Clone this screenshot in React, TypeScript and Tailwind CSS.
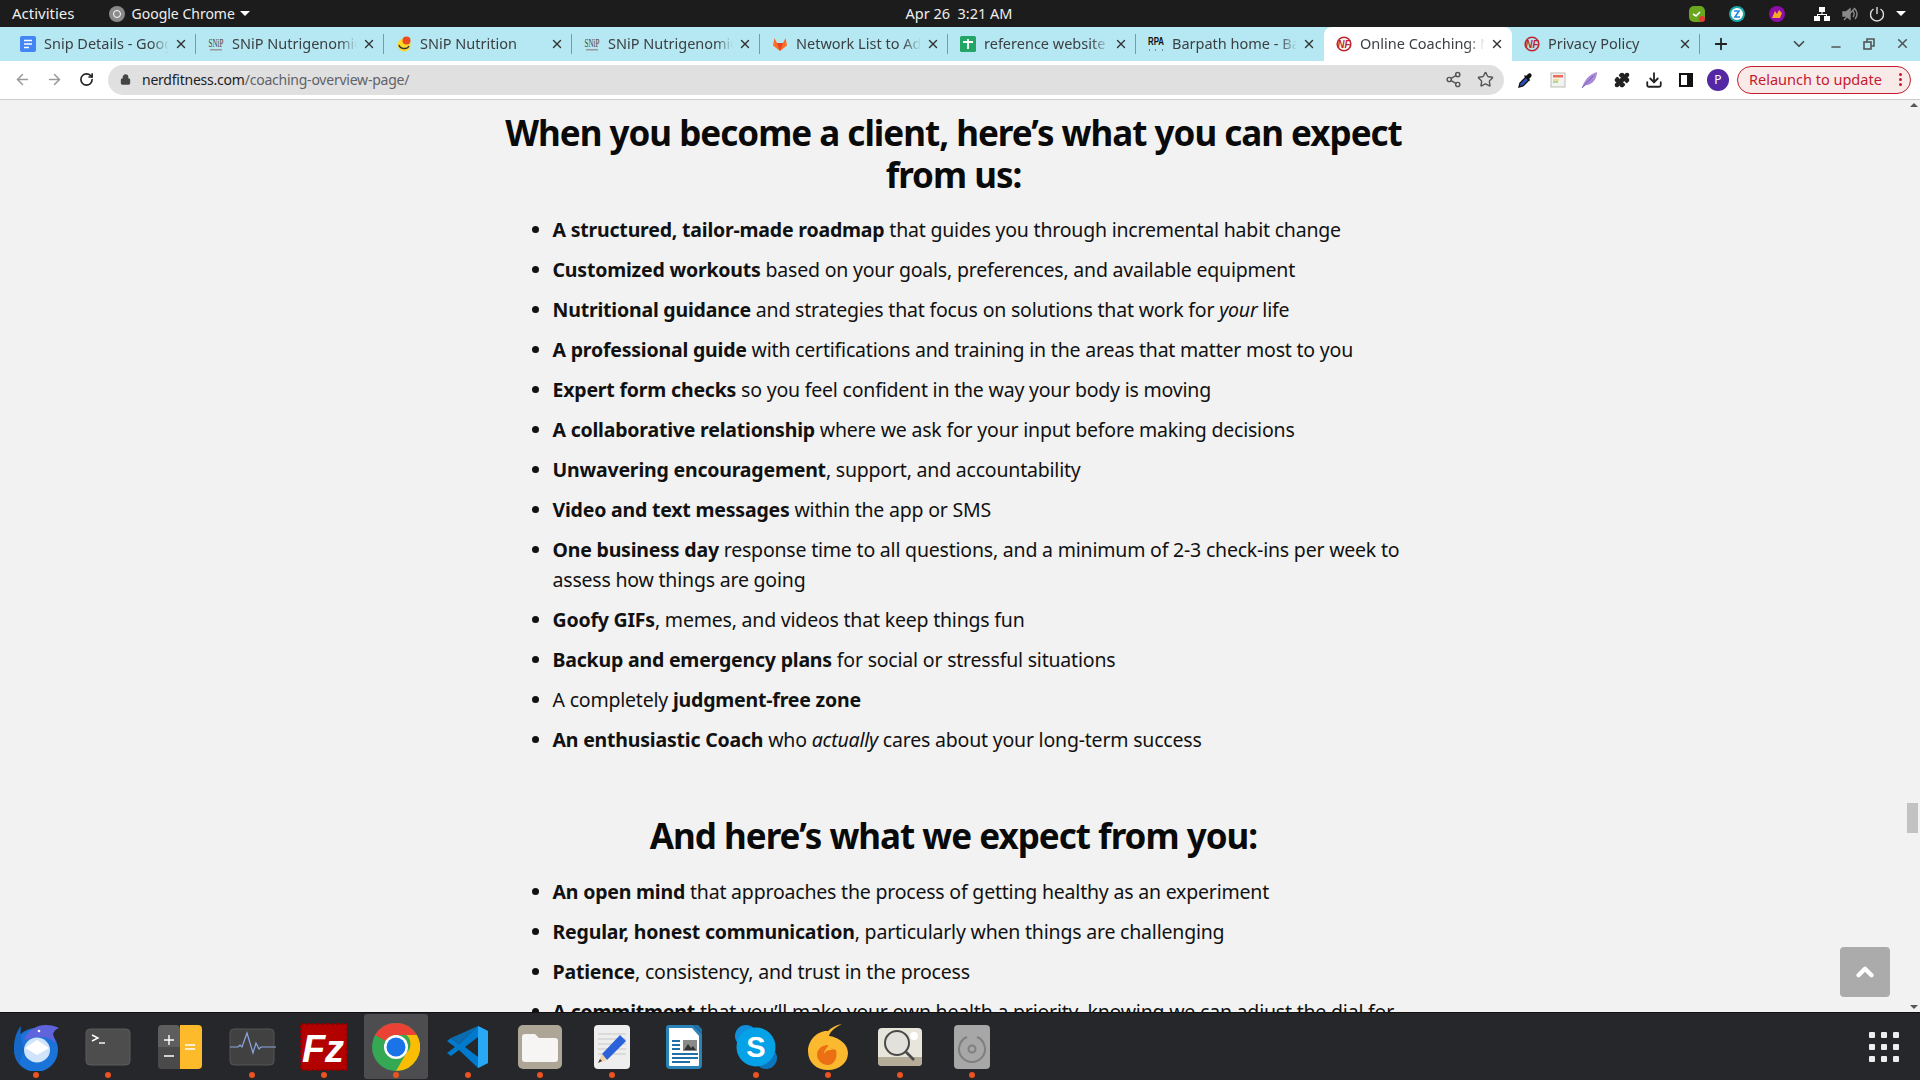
import { ArrowLeft, ArrowRight, ChevronDown, ChevronUp, Download, Lock, Minus, Plus, Puzzle, RotateCw, Share2, Star, X } from "lucide-react";
import type { ReactNode } from "react";

const UI_FONT = "font-['Noto_Sans',sans-serif]";

function NfIcon() {
  return (
    <svg viewBox="0 0 16 16" className="h-4 w-4 shrink-0">
      <circle cx="8" cy="8" r="6.8" fill="none" stroke="#c0272d" strokeWidth="1.6" />
      <text x="8" y="11.500" textAnchor="middle" fontSize="10" fontWeight="800" fontStyle="italic" fill="#c0272d" fontFamily="Liberation Sans" textLength="13" lengthAdjust="spacingAndGlyphs">NF</text>
    </svg>
  );
}

function SnipIcon() {
  return (
    <svg viewBox="0 0 16 16" className="h-4 w-4 shrink-0">
      <text x="8" y="11" textAnchor="middle" fontSize="13" fontFamily="Liberation Serif" fill="#444" textLength="15" lengthAdjust="spacingAndGlyphs">SNiP</text>
      <rect x="2" y="13" width="12" height="1.5" fill="#999" />
    </svg>
  );
}

const tabs: { title: string; icon: ReactNode; active?: boolean; hideSep?: boolean }[] = [
  {
    title: "Snip Details - Google Docs",
    icon: (
      <svg viewBox="0 0 16 16" className="h-4 w-4 shrink-0">
        <rect x="0" y="0" width="16" height="16" rx="2" fill="#4285f4" />
        <path d="M4 4.5h8M4 8h8M4 11.5h5" stroke="#fff" strokeWidth="1.6" />
      </svg>
    ),
  },
  { title: "SNiP Nutrigenomics", icon: <SnipIcon /> },
  {
    title: "SNiP Nutrition",
    icon: (
      <svg viewBox="0 0 16 16" className="h-4 w-4 shrink-0">
        <circle cx="8" cy="9" r="6.5" fill="#fbd92c" />
        <path d="M3 9c1 4 8 5 10 1" fill="none" stroke="#333" strokeWidth="1.4" />
        <circle cx="10.5" cy="4.5" r="4" fill="#ea4b1f" />
      </svg>
    ),
  },
  { title: "SNiP Nutrigenomics", icon: <SnipIcon /> },
  {
    title: "Network List to Add",
    icon: (
      <svg viewBox="0 0 16 16" className="h-4 w-4 shrink-0">
        <path d="M8 15 1 9.5 2.5 2 5 7h6l2.5-5L15 9.5z" fill="#fc6d26" />
        <path d="M8 15 5 7h6z" fill="#e24329" />
      </svg>
    ),
  },
  {
    title: "reference website",
    icon: (
      <svg viewBox="0 0 16 16" className="h-4 w-4 shrink-0">
        <rect width="16" height="16" rx="1.5" fill="#23a566" />
        <path d="M3 6h10M8 3v10" stroke="#fff" strokeWidth="1.8" />
      </svg>
    ),
  },
  {
    title: "Barpath home - Barpath",
    icon: (
      <svg viewBox="0 0 16 16" className="h-4 w-4 shrink-0">
        <text x="8" y="9" textAnchor="middle" fontSize="10" fontWeight="700" fontFamily="Liberation Sans" fill="#111" textLength="16" lengthAdjust="spacingAndGlyphs">RPA</text>
        <path d="M1 14h1M7 14h1M14 14h1" stroke="#777" strokeWidth="1.5" />
      </svg>
    ),
    hideSep: true,
  },
  { title: "Online Coaching: Nerd", icon: <NfIcon />, active: true, hideSep: true },
  { title: "Privacy Policy", icon: <NfIcon /> },
];

const expectFromUs: ReactNode[] = [
  <><b>A structured, tailor-made roadmap</b> that guides you through incremental habit change</>,
  <><b>Customized workouts</b> based on your goals, preferences, and available equipment</>,
  <><b>Nutritional guidance</b> and strategies that focus on solutions that work for <i>your</i> life</>,
  <><b>A professional guide</b> with certifications and training in the areas that matter most to you</>,
  <><b>Expert form checks</b> so you feel confident in the way your body is moving</>,
  <><b>A collaborative relationship</b> where we ask for your input before making decisions</>,
  <><b>Unwavering encouragement</b>, support, and accountability</>,
  <><b>Video and text messages</b> within the app or SMS</>,
  <><b>One business day</b> response time to all questions, and a minimum of 2-3 check-ins per week to<br />assess how things are going</>,
  <><b>Goofy GIFs</b>, memes, and videos that keep things fun</>,
  <><b>Backup and emergency plans</b> for social or stressful situations</>,
  <>A completely <b>judgment-free zone</b></>,
  <><b>An enthusiastic Coach</b> who <i>actually</i> cares about your long-term success</>,
];

const expectFromYou: ReactNode[] = [
  <><b>An open mind</b> that approaches the process of getting healthy as an experiment</>,
  <><b>Regular, honest communication</b>, particularly when things are challenging</>,
  <><b>Patience</b>, consistency, and trust in the process</>,
  <><b>A commitment</b> that you’ll make your own health a priority, knowing we can adjust the dial for</>,
];

const dockIcons: { icon: ReactNode; dot: boolean; active?: boolean }[] = [
  {
    dot: true,
    icon: (
      <svg viewBox="0 0 48 48" className="h-12 w-12">
        <circle cx="24" cy="27" r="22" fill="#1a73d9" />
        <path d="M12 18C14 8 24 2 34 2c5 0 9 1 13 3-3 1-5 3-6 6 1 3 2 6 2 9-6-7-20-8-31-2z" fill="#5f63dc" />
        <path d="M9 3c-5 6-7 14-7 22 0 6 2 11 5 15l6-12C9 20 8 11 9 3z" fill="#1567c8" />
        <ellipse cx="25" cy="27" rx="13" ry="12.500" fill="#cfe3fa" />
        <path d="M13 25 25 17l12 8-12 7z" fill="#fff" />
        <circle cx="27" cy="8" r="1.300" fill="#fff" />
      </svg>
    ),
  },
  {
    dot: true,
    icon: (
      <svg viewBox="0 0 48 48" className="h-12 w-12">
        <rect x="2" y="6" width="44" height="36" rx="4" fill="#4d4d4d" stroke="#5c5c5c" />
        <path d="m8 12 6 3-6 3" fill="none" stroke="#fff" strokeWidth="1.4" />
        <path d="M15 20h6" stroke="#fff" strokeWidth="1.4" />
      </svg>
    ),
  },
  {
    dot: false,
    icon: (
      <svg viewBox="0 0 48 48" className="h-12 w-12">
        <rect x="2" y="2" width="22" height="44" rx="4" fill="#5e5e5e" />
        <path d="M2 24h22v22H6a4 4 0 0 1-4-4z" fill="#4a4a4a" />
        <path d="M24 2h18a4 4 0 0 1 4 4v36a4 4 0 0 1-4 4H24z" fill="#fdbb2c" />
        <path d="M8 17h10M13 12v10M8 33h10M29 22h10M29 26h10" stroke="#fff" strokeWidth="1.4" />
      </svg>
    ),
  },
  {
    dot: true,
    icon: (
      <svg viewBox="0 0 48 48" className="h-12 w-12">
        <rect x="2" y="6" width="44" height="36" rx="4" fill="#414141" stroke="#565656" />
        <path d="M2 24h8l2-2 2 2 5-14 6 20 3-10 3 6 2-2h17" fill="none" stroke="#8da7e0" strokeWidth="1.2" />
      </svg>
    ),
  },
  {
    dot: true,
    icon: (
      <svg viewBox="0 0 48 48" className="h-12 w-12">
        <rect x="1" y="1" width="46" height="46" fill="#b30000" stroke="#8d0000" strokeWidth="2" strokeDasharray="3 2" />
        <rect x="3" y="3" width="42" height="42" fill="#b30000" />
        <text x="23" y="39" textAnchor="middle" fontSize="38" fontWeight="700" fontStyle="italic" fill="#fff" fontFamily="Liberation Sans">Fz</text>
      </svg>
    ),
  },
  {
    dot: true,
    active: true,
    icon: (
      <svg viewBox="0 0 48 48" className="relative h-12 w-12">
        <circle cx="24" cy="24" r="24" fill="#34a853" />
        <path d="M24 0a24 24 0 0 1 20.8 12H24a12 12 0 0 0-10.4 6L3.2 12A24 24 0 0 1 24 0z" fill="#ea4335" />
        <path d="M44.8 12A24 24 0 0 1 24 48l10.4-18a12 12 0 0 0 0-18z" fill="#fbbc04" />
        <circle cx="24" cy="24" r="12" fill="#fff" />
        <circle cx="24" cy="24" r="9.5" fill="#1a73e8" />
      </svg>
    ),
  },
  {
    dot: true,
    icon: (
      <svg viewBox="0 0 48 48" className="h-12 w-12">
        <path d="M34 3 44 8v32l-10 5L15 27l-8 6-4-3 8-6-8-6 4-3 8 6z" fill="#007acc" />
        <path d="M34 3 44 8v32l-10 5z" fill="#29a9f5" />
        <path d="M34 14v20L21 24z" fill="#26272a" />
        <path d="M34 3 7 15l8 6z" fill="#0b6db0" />
      </svg>
    ),
  },
  {
    dot: true,
    icon: (
      <svg viewBox="0 0 48 48" className="h-12 w-12">
        <rect x="2" y="2" width="44" height="44" rx="5" fill="#ada595" />
        <path d="M6 14a3 3 0 0 1 3-3h10l4 4h16a3 3 0 0 1 3 3v18a3 3 0 0 1-3 3H9a3 3 0 0 1-3-3z" fill="#f6f5f3" />
      </svg>
    ),
  },
  {
    dot: true,
    icon: (
      <svg viewBox="0 0 48 48" className="h-12 w-12">
        <rect x="6" y="2" width="36" height="44" rx="4" fill="#eeeeee" />
        <path d="M10 11h28M10 16h28M10 21h28M10 26h28M10 31h28" stroke="#c7c7c7" />
        <path d="m14 31 18-19 6 6-19 19z" fill="#2b62d9" />
        <path d="m14 31-4 9 9-3z" fill="#f1cfa7" />
        <path d="m10 40 2-4 2 2z" fill="#333" />
      </svg>
    ),
  },
  {
    dot: false,
    icon: (
      <svg viewBox="0 0 48 48" className="h-12 w-12">
        <path d="M9 2h24l9 9v31a4 4 0 0 1-4 4H10a4 4 0 0 1-4-4V5a3 3 0 0 1 3-3z" fill="#2a83b8" />
        <path d="M9 5h23l7 8v29a1 1 0 0 1-1 1H10a1 1 0 0 1-1-1z" fill="#fff" />
        <path d="M12 18h8M12 22h8M12 26h8M12 31h26M12 35h26M12 39h18" stroke="#1f6fa8" strokeWidth="1.8" />
        <rect x="23" y="17" width="14" height="11" fill="#8a8a8a" />
        <path d="m24 27 4-6 3 4 2-2 3 4z" fill="#333" />
        <path d="M33 2h5l4 4v5z" fill="#1f6fa8" />
      </svg>
    ),
  },
  {
    dot: true,
    icon: (
      <svg viewBox="0 0 48 48" className="h-12 w-12">
        <circle cx="14" cy="13" r="11" fill="#0f8fdc" />
        <circle cx="34" cy="35" r="11" fill="#0b76bd" />
        <circle cx="24" cy="24" r="19.5" fill="#06a2e8" />
        <text x="24" y="34" textAnchor="middle" fontSize="29" fontWeight="700" fill="#fff" fontFamily="Liberation Sans">S</text>
      </svg>
    ),
  },
  {
    dot: true,
    icon: (
      <svg viewBox="0 0 48 48" className="h-12 w-12">
        <path d="M38 1c-8 4-12 8-13 12 8 1 19 7 19 17 0 10-9 17-20 17S4 40 4 28C4 17 14 7 24 8c3-3 8-6 14-7z" fill="#fbb92f" />
        <path d="M24 22c1 3 3 4 8 5 2 8-2 15-8 15s-11-5-11-10c0-6 5-10 11-10z" fill="#ec6f14" />
        <path d="M25 22c-2 3-5 5-5 9 2-4 5-4 9-4-2-1-3-2-4-5z" fill="#fbb92f" />
      </svg>
    ),
  },
  {
    dot: true,
    icon: (
      <svg viewBox="0 0 48 48" className="h-12 w-12">
        <rect x="2" y="5" width="44" height="38" rx="4" fill="#e8e5db" />
        <path d="M2 34h44v5a4 4 0 0 1-4 4H6a4 4 0 0 1-4-4z" fill="#b5ad97" />
        <circle cx="38" cy="13" r="4" fill="#fff" />
        <circle cx="21" cy="20" r="12" fill="#e0e0dc" fillOpacity="0.7" stroke="#4a4a4a" strokeWidth="2" />
        <path d="m30 29 8 8" stroke="#4a4a4a" strokeWidth="2.6" />
      </svg>
    ),
  },
  {
    dot: true,
    icon: (
      <svg viewBox="0 0 48 48" className="h-12 w-12">
        <rect x="6" y="2" width="36" height="44" rx="4" fill="#a7a7a7" />
        <path d="M29 14a13 13 0 1 1-10 0" fill="none" stroke="#7f7f7f" strokeWidth="2" />
        <circle cx="24" cy="26" r="3.5" fill="none" stroke="#7f7f7f" strokeWidth="2" />
      </svg>
    ),
  },
];

function ListRows({ rows }: { rows: ReactNode[] }) {
  return (
    <ul className="flex list-disc flex-col gap-[10px] pl-[49px] text-[19.5px] leading-[30px] tracking-[-0.2px] text-[#111]">
      {rows.map((row, i) => (
        <li key={i} className="whitespace-nowrap">{row}</li>
      ))}
    </ul>
  );
}

function TabStrip() {
  return (
    <div className="flex h-[34px] items-stretch bg-[#b5e8f2] pb-[1px] pl-2 text-[14.5px] text-[#3c4043]">
      {tabs.map((tab, i) => (
        <div key={i} className={`flex w-[188px] shrink-0 items-center pl-3 ${tab.active ? "-mb-[1px] rounded-t-lg bg-white" : ""}`}>
          {tab.icon}
          <span className="ml-2 mr-[5px] min-w-0 flex-1 overflow-hidden whitespace-nowrap [mask-image:linear-gradient(to_right,black_86%,transparent)]">{tab.title}</span>
          <X size={14} strokeWidth={2.4} className="shrink-0 text-[#333]" />
          <span className={`ml-[7px] h-5 w-px shrink-0 ${tab.hideSep ? "" : "bg-[#7d9aa0]"}`} />
        </div>
      ))}
      <div className="flex w-[42px] items-center justify-center">
        <Plus size={18} strokeWidth={2.4} className="text-[#222]" />
      </div>
      <div className="ml-auto flex items-center text-[#444]">
        <div className="flex w-[38px] justify-center"><ChevronDown size={18} strokeWidth={2.2} /></div>
        <div className="flex w-[36px] justify-center pt-[6px]"><Minus size={14} strokeWidth={2.4} className="text-[#555]" /></div>
        <div className="flex w-[30px] justify-center">
          <svg viewBox="0 0 12 12" className="h-3 w-3" fill="none" stroke="#555" strokeWidth="1.6">
            <rect x="1" y="4" width="7" height="7" />
            <path d="M4 4V1h7v7H8" />
          </svg>
        </div>
        <div className="flex w-[36px] justify-center"><X size={15} strokeWidth={2.6} className="text-[#555]" /></div>
      </div>
    </div>
  );
}

function Toolbar() {
  return (
    <div className="flex h-[39px] items-center border-b border-[#cccccc] bg-white pb-[1px]">
      <div className="flex w-[108px] items-center pl-[6px]">
        <div className="flex w-[32px] justify-center"><ArrowLeft size={17} className="text-[#9a9a9a]" strokeWidth={2.2} /></div>
        <div className="flex w-[32px] justify-center"><ArrowRight size={17} className="text-[#9a9a9a]" strokeWidth={2.2} /></div>
        <div className="flex w-[32px] justify-center"><RotateCw size={15} className="text-[#222]" strokeWidth={2.6} /></div>
      </div>
      <div className="flex h-[30px] w-[1396px] items-center rounded-full bg-[#e0e0e0] pl-[12px] pr-[10px] text-[14px] tracking-[-0.23px]">
        <Lock size={11} className="mr-[11px] text-[#444]" fill="#444" strokeWidth={2.4} />
        <span className="text-[#222]">nerdfitness.com</span>
        <span className="text-[#5f6368]">/coaching-overview-page/</span>
        <div className="ml-auto flex items-center gap-[15px] text-[#555]">
          <Share2 size={17} strokeWidth={2} />
          <Star size={17} strokeWidth={2} />
        </div>
      </div>
      <div className="flex flex-1 items-center pl-[6px]">
        <div className="flex w-[32px] justify-center">
          <svg viewBox="0 0 18 18" className="h-[18px] w-[18px]">
            <path d="M2 16l1-4 6-6 3 3-6 6z" fill="#2b4fb8" stroke="#111" strokeWidth="1.3" />
            <path d="M9 5l2-2c2-2 5 1 3 3l-2 2 1 1-1 1-5-5 1-1z" fill="#111" />
          </svg>
        </div>
        <div className="flex w-[32px] justify-center">
          <svg viewBox="0 0 16 16" className="h-4 w-4">
            <rect x="1" y="1" width="14" height="14" fill="#f2f2ee" stroke="#bdbdb5" />
            <rect x="3" y="3" width="10" height="2.5" fill="#ee6a5f" />
            <path d="M3 8h6" stroke="#e6c73d" />
            <path d="M3 10h5" stroke="#6bbf59" />
          </svg>
        </div>
        <div className="flex w-[32px] justify-center">
          <svg viewBox="0 0 18 18" className="h-[18px] w-[18px]">
            <path d="M1 17C3 9 9 3 16 1c0 6-4 13-11 13z" fill="#a98ad8" />
            <path d="M1 17 12 5" stroke="#7a55b8" />
          </svg>
        </div>
        <div className="flex w-[32px] justify-center"><Puzzle size={16} fill="#222" className="text-[#222]" /></div>
        <div className="flex w-[32px] justify-center"><Download size={18} strokeWidth={2.4} className="text-[#222]" /></div>
        <div className="flex w-[32px] justify-center">
          <svg viewBox="0 0 14 14" className="h-[14px] w-[14px]">
            <rect x="1" y="1" width="12" height="12" fill="none" stroke="#111" strokeWidth="2" />
            <rect x="8" y="1" width="5" height="12" fill="#111" />
          </svg>
        </div>
        <div className="flex w-[32px] justify-center">
          <div className="flex h-[22px] w-[22px] items-center justify-center rounded-full bg-[#5427a5] text-[12px] text-white">P</div>
        </div>
        <div className="ml-[3px] flex h-[28px] w-[174px] items-center rounded-full border border-[#c5192d] bg-[#f9eaea] pl-[11px] pr-[8px] text-[14.5px] text-[#c5192d]">
          <span>Relaunch to update</span>
          <div className="ml-auto flex flex-col gap-[2px]">
            <span className="h-[3px] w-[3px] rounded-full bg-[#c5192d]" />
            <span className="h-[3px] w-[3px] rounded-full bg-[#c5192d]" />
            <span className="h-[3px] w-[3px] rounded-full bg-[#c5192d]" />
          </div>
        </div>
      </div>
    </div>
  );
}

export default function App() {
  return (
    <div className={`flex h-[1080px] w-[1920px] flex-col overflow-hidden bg-[#f2f2f2] ${UI_FONT}`}>
      <div className="grid h-[27px] grid-cols-[1fr_auto_1fr] items-center bg-[#1c1c1c] pl-3 pr-[14px] text-[14px] text-[#eeeeee]">
        <div className="flex items-center">
          <span className="text-[15px]">Activities</span>
          <span className="ml-[34px] flex h-4 w-4 items-center justify-center rounded-full bg-[#8a8a8a]">
            <span className="h-2 w-2 rounded-full border border-white" />
          </span>
          <span className="ml-[7px]">Google Chrome</span>
          <span className="ml-[5px] h-0 w-0 border-x-[5px] border-t-[5px] border-x-transparent border-t-white" />
        </div>
        <div className="whitespace-pre text-[14.5px]">Apr 26  3:21 AM</div>
        <div className="flex items-center justify-end">
          <svg viewBox="0 0 16 16" className="h-4 w-4">
            <rect width="16" height="16" rx="5" fill="#6aa61e" />
            <path d="m4 8 3 2 4-4" stroke="#fff" strokeWidth="1.6" fill="none" />
            <circle cx="13" cy="13" r="3" fill="#e53935" />
          </svg>
          <svg viewBox="0 0 16 16" className="ml-6 h-4 w-4">
            <circle cx="8" cy="8" r="7" fill="#fff" stroke="#1ba7a7" strokeWidth="2" />
            <path d="M5 5h5L6 11h5" stroke="#1e88e5" strokeWidth="1.6" fill="none" />
          </svg>
          <svg viewBox="0 0 16 16" className="ml-6 h-4 w-4">
            <circle cx="8" cy="8" r="8" fill="#8e0ea8" />
            <path d="M3 12 6 5l2 3 2-4 3 3-2 5z" fill="#f9a825" />
          </svg>
          <svg viewBox="0 0 16 16" className="ml-[29px] h-4 w-4" fill="#fff">
            <rect x="5" y="1" width="6" height="5" />
            <rect x="0" y="10" width="6" height="5" />
            <rect x="10" y="10" width="6" height="5" />
            <path d="M7.5 6h1v2H13v2h-1V9H4v1H3V8h4.5z" />
          </svg>
          <svg viewBox="0 0 16 16" className="ml-[12px] h-4 w-4" fill="none" stroke="#8a8a8a" strokeWidth="1.4">
            <path d="M1 6v4h3l4 3V3L4 6z" fill="#8a8a8a" />
            <path d="M11 5c1.500 2 1.500 4 0 6M13 3c2.500 3 2.500 7 0 10M2 14 13 2" />
          </svg>
          <svg viewBox="0 0 16 16" className="ml-[11px] h-4 w-4" fill="none" stroke="#ddd" strokeWidth="1.4">
            <path d="M8 1v7M4.500 3a6.500 6.500 0 1 0 7 0" />
          </svg>
          <span className="ml-[11px] h-0 w-0 border-x-[5px] border-t-[5px] border-x-transparent border-t-white" />
        </div>
      </div>

      <TabStrip />
      <Toolbar />

      <div className="relative flex min-h-0 flex-1 overflow-hidden">
        <main className="min-w-0 flex-1 overflow-hidden pt-[12px]">
          <div className="mx-auto w-[900px]">
            <h2 className="whitespace-nowrap text-center text-[35px] font-bold leading-[42px] tracking-[-1px] text-[#0a0a0a]">
              When you become a client, here’s what you can expect
              <br />
              from us:
            </h2>
            <div className="mt-[19px]">
              <ListRows rows={expectFromUs} />
            </div>
            <h2 className="mt-[60px] text-center text-[35px] font-bold leading-[42px] tracking-[-1px] text-[#0a0a0a]">
              And here’s what we expect from you:
            </h2>
            <div className="mt-[20px]">
              <ListRows rows={expectFromYou} />
            </div>
          </div>
        </main>

        <div className="flex w-[13px] shrink-0 flex-col items-center justify-between py-[3px]">
          <span className="h-0 w-0 border-x-[4px] border-b-[4px] border-x-transparent border-b-[#555]" />
          <span className="h-0 w-0 border-x-[4px] border-t-[4px] border-x-transparent border-t-[#555]" />
        </div>
        <div className="absolute right-[2px] top-[703px] h-[30px] w-[11px] bg-[#c2c2c2]" />
        <div className="absolute right-[30px] top-[847px] flex h-[50px] w-[50px] items-center justify-center rounded-[4px] bg-[#ababab]">
          <ChevronUp size={26} strokeWidth={4} className="text-white" />
        </div>
      </div>

      <div className="flex h-[68px] items-center border-t border-[#111] bg-[#26272a]">
        {dockIcons.map((item, i) => (
          <div key={i} className="relative flex h-full w-[72px] shrink-0 items-center justify-center">
            {item.active && <div className="absolute inset-x-1 inset-y-[1px] rounded-[3px] bg-[#4d4d4f]" />}
            <div className="relative">{item.icon}</div>
            {item.dot && <span className="absolute bottom-[2px] left-[33px] h-[6px] w-[6px] rounded-full bg-[#e95420]" />}
          </div>
        ))}
        <div className="ml-auto mr-[21px] grid grid-cols-3 gap-[6px]">
          {Array.from({ length: 9 }).map((_, i) => (
            <span key={i} className="h-[6px] w-[6px] rounded-[1px] bg-[#eeeeee]" />
          ))}
        </div>
      </div>
    </div>
  );
}
